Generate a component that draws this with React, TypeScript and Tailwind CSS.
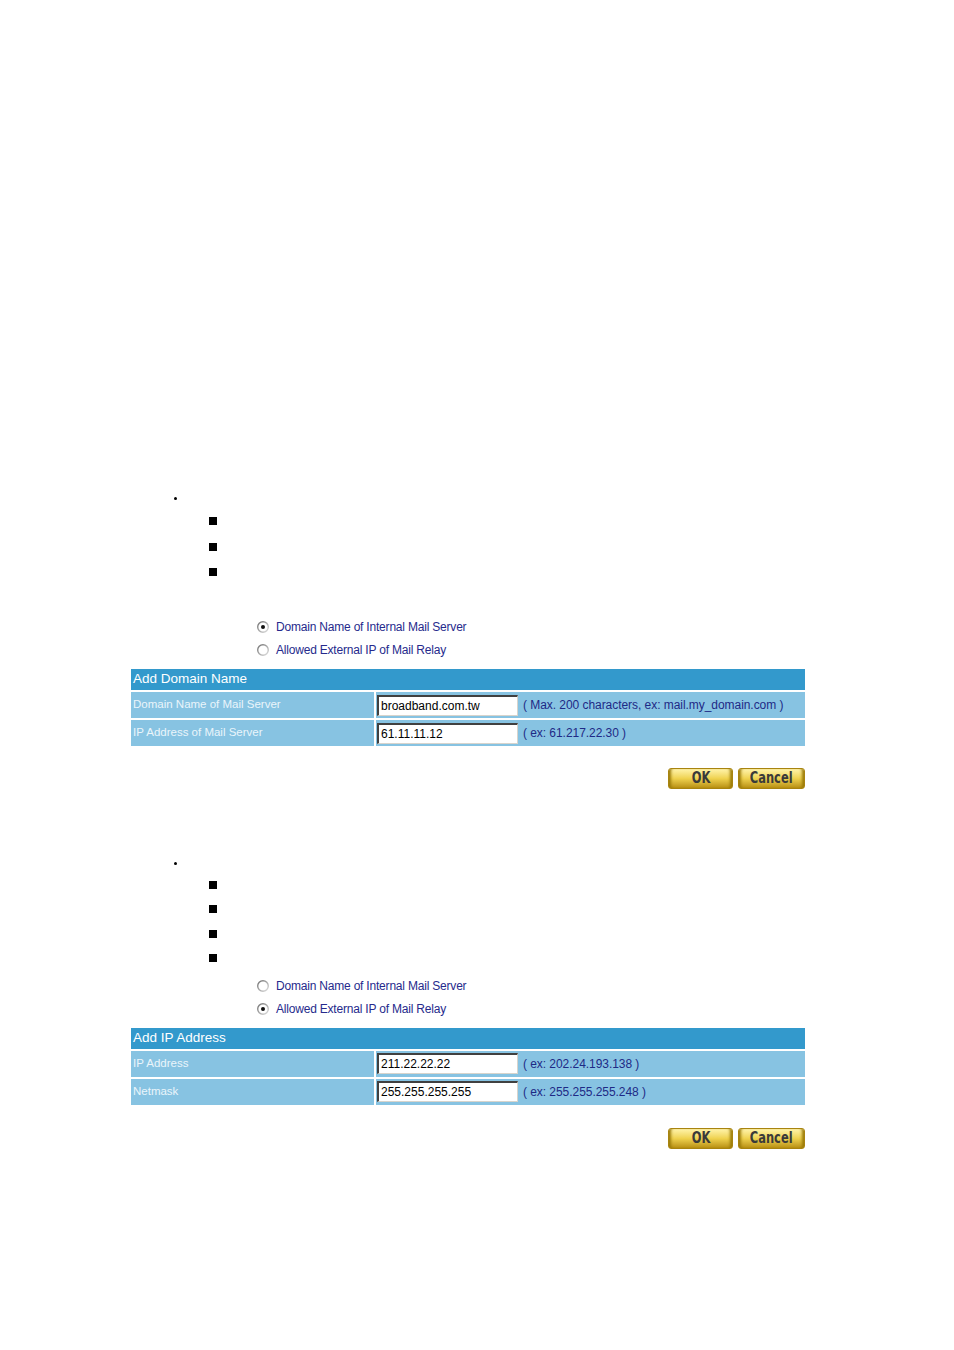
import React from "react";

const font = { fontFamily: '"Liberation Sans", Arial, sans-serif' };

function Radio({ checked }: { checked: boolean }) {
  return (
    <svg width="12" height="12" viewBox="0 0 12 12" className="shrink-0">
      <defs>
        <linearGradient id={checked ? "rg1" : "rg0"} x1="0" y1="0" x2="1" y2="1">
          <stop offset="0" stopColor="#6e6e6e" />
          <stop offset="1" stopColor="#e0e0e0" />
        </linearGradient>
      </defs>
      <circle cx="6" cy="6" r="5.3" fill="#fff" stroke={`url(#${checked ? "rg1" : "rg0"})`} strokeWidth="1.4" />
      {checked && <circle cx="6" cy="6" r="2" fill="#111" />}
    </svg>
  );
}

function RadioRow({ checked, label }: { checked: boolean; label: string }) {
  return (
    <div className="flex h-[23px] items-center pl-[257px]">
      <Radio checked={checked} />
      <span className="ml-[7px] text-[12px] leading-none text-[#262a8c] tracking-[-0.2px]">{label}</span>
    </div>
  );
}

function Bullets({ count, gap }: { count: number; gap: string }) {
  return (
    <div className={`flex flex-col ${gap}`}>
      {Array.from({ length: count }).map((_, i) => (
        <div key={i} className="ml-[209px] h-[8px] w-[8px] bg-black" />
      ))}
    </div>
  );
}

function Field({ value }: { value: string }) {
  return (
    <div className="flex h-[21px] w-[141px] items-center border-t-2 border-l-2 border-b border-r border-t-[#404040] border-l-[#404040] border-b-[#d8d4cc] border-r-[#d8d4cc] bg-white pl-[2px] text-[12px] text-black">
      {value}
    </div>
  );
}

function Row({ label, value, hint }: { label: string; value: string; hint: string }) {
  return (
    <div className="flex h-[26px] gap-[2px]">
      <div className="flex w-[243px] items-center bg-[#87c3e2] pl-[2px] text-[11.5px] text-[#eaf5fb]">{label}</div>
      <div className="flex flex-1 items-center bg-[#87c3e2] pl-[1px]">
        <Field value={value} />
        <span className="ml-[5px] text-[12px] text-[#1e2a86] tracking-[-0.05px]">{hint}</span>
      </div>
    </div>
  );
}

function Table({ title, rows }: { title: string; rows: { label: string; value: string; hint: string }[] }) {
  return (
    <div className="ml-[131px] flex w-[674px] flex-col gap-[2px]">
      <div className="flex h-[21px] items-center bg-[#3399cc] pl-[2px] text-[13.5px] text-white">{title}</div>
      {rows.map((r) => (
        <Row key={r.label} {...r} />
      ))}
    </div>
  );
}

function GoldButton({ label, width }: { label: string; width: string }) {
  return (
    <div
      className={`${width} flex h-[21px] items-center justify-center rounded-[3px] border border-[#a88410] bg-gradient-to-b from-[#fff4a8] via-[#efd24e] to-[#b8900e] shadow-[inset_4px_0_3px_-2px_#9a7a08,inset_-4px_0_3px_-2px_#9a7a08]`}
    >
      <span
        className="text-[15px] font-bold leading-none text-[#3a3a3a] scale-x-[0.85] scale-y-[1.1]"
        style={{ fontFamily: '"DejaVu Sans Condensed", "DejaVu Sans", sans-serif' }}
      >
        {label}
      </span>
    </div>
  );
}

function Buttons() {
  return (
    <div className="flex justify-end gap-[5px] pr-[149px]">
      <GoldButton label="OK" width="w-[65px]" />
      <GoldButton label="Cancel" width="w-[67px]" />
    </div>
  );
}

function Dot() {
  return (
    <div className="h-[3px] pl-[174px]">
      <div className="h-[3px] w-[3px] rounded-full bg-black" />
    </div>
  );
}

export default function App() {
  return (
    <div className="relative h-[1350px] w-[954px] bg-white" style={font}>
      <div className="pt-[497px]">
        <Dot />
        <div className="mt-[17px]">
          <Bullets count={3} gap="gap-[17.5px]" />
        </div>
        <div className="mt-[39.5px]">
          <RadioRow checked label="Domain Name of Internal Mail Server" />
          <RadioRow checked={false} label="Allowed External IP of Mail Relay" />
        </div>
        <div className="mt-[7.5px]">
          <Table
            title="Add Domain Name"
            rows={[
              { label: "Domain Name of Mail Server", value: "broadband.com.tw", hint: "( Max. 200 characters, ex: mail.my_domain.com )" },
              { label: "IP Address of Mail Server", value: "61.11.11.12", hint: "( ex: 61.217.22.30 )" },
            ]}
          />
        </div>
        <div className="mt-[22px]">
          <Buttons />
        </div>

        <div className="mt-[73px]">
          <Dot />
        </div>
        <div className="mt-[16px]">
          <Bullets count={4} gap="gap-[16.3px]" />
        </div>
        <div className="mt-[12.6px]">
          <RadioRow checked={false} label="Domain Name of Internal Mail Server" />
          <RadioRow checked label="Allowed External IP of Mail Relay" />
        </div>
        <div className="mt-[7.5px]">
          <Table
            title="Add IP Address"
            rows={[
              { label: "IP Address", value: "211.22.22.22", hint: "( ex: 202.24.193.138 )" },
              { label: "Netmask", value: "255.255.255.255", hint: "( ex: 255.255.255.248 )" },
            ]}
          />
        </div>
        <div className="mt-[23px]">
          <Buttons />
        </div>
      </div>
    </div>
  );
}
